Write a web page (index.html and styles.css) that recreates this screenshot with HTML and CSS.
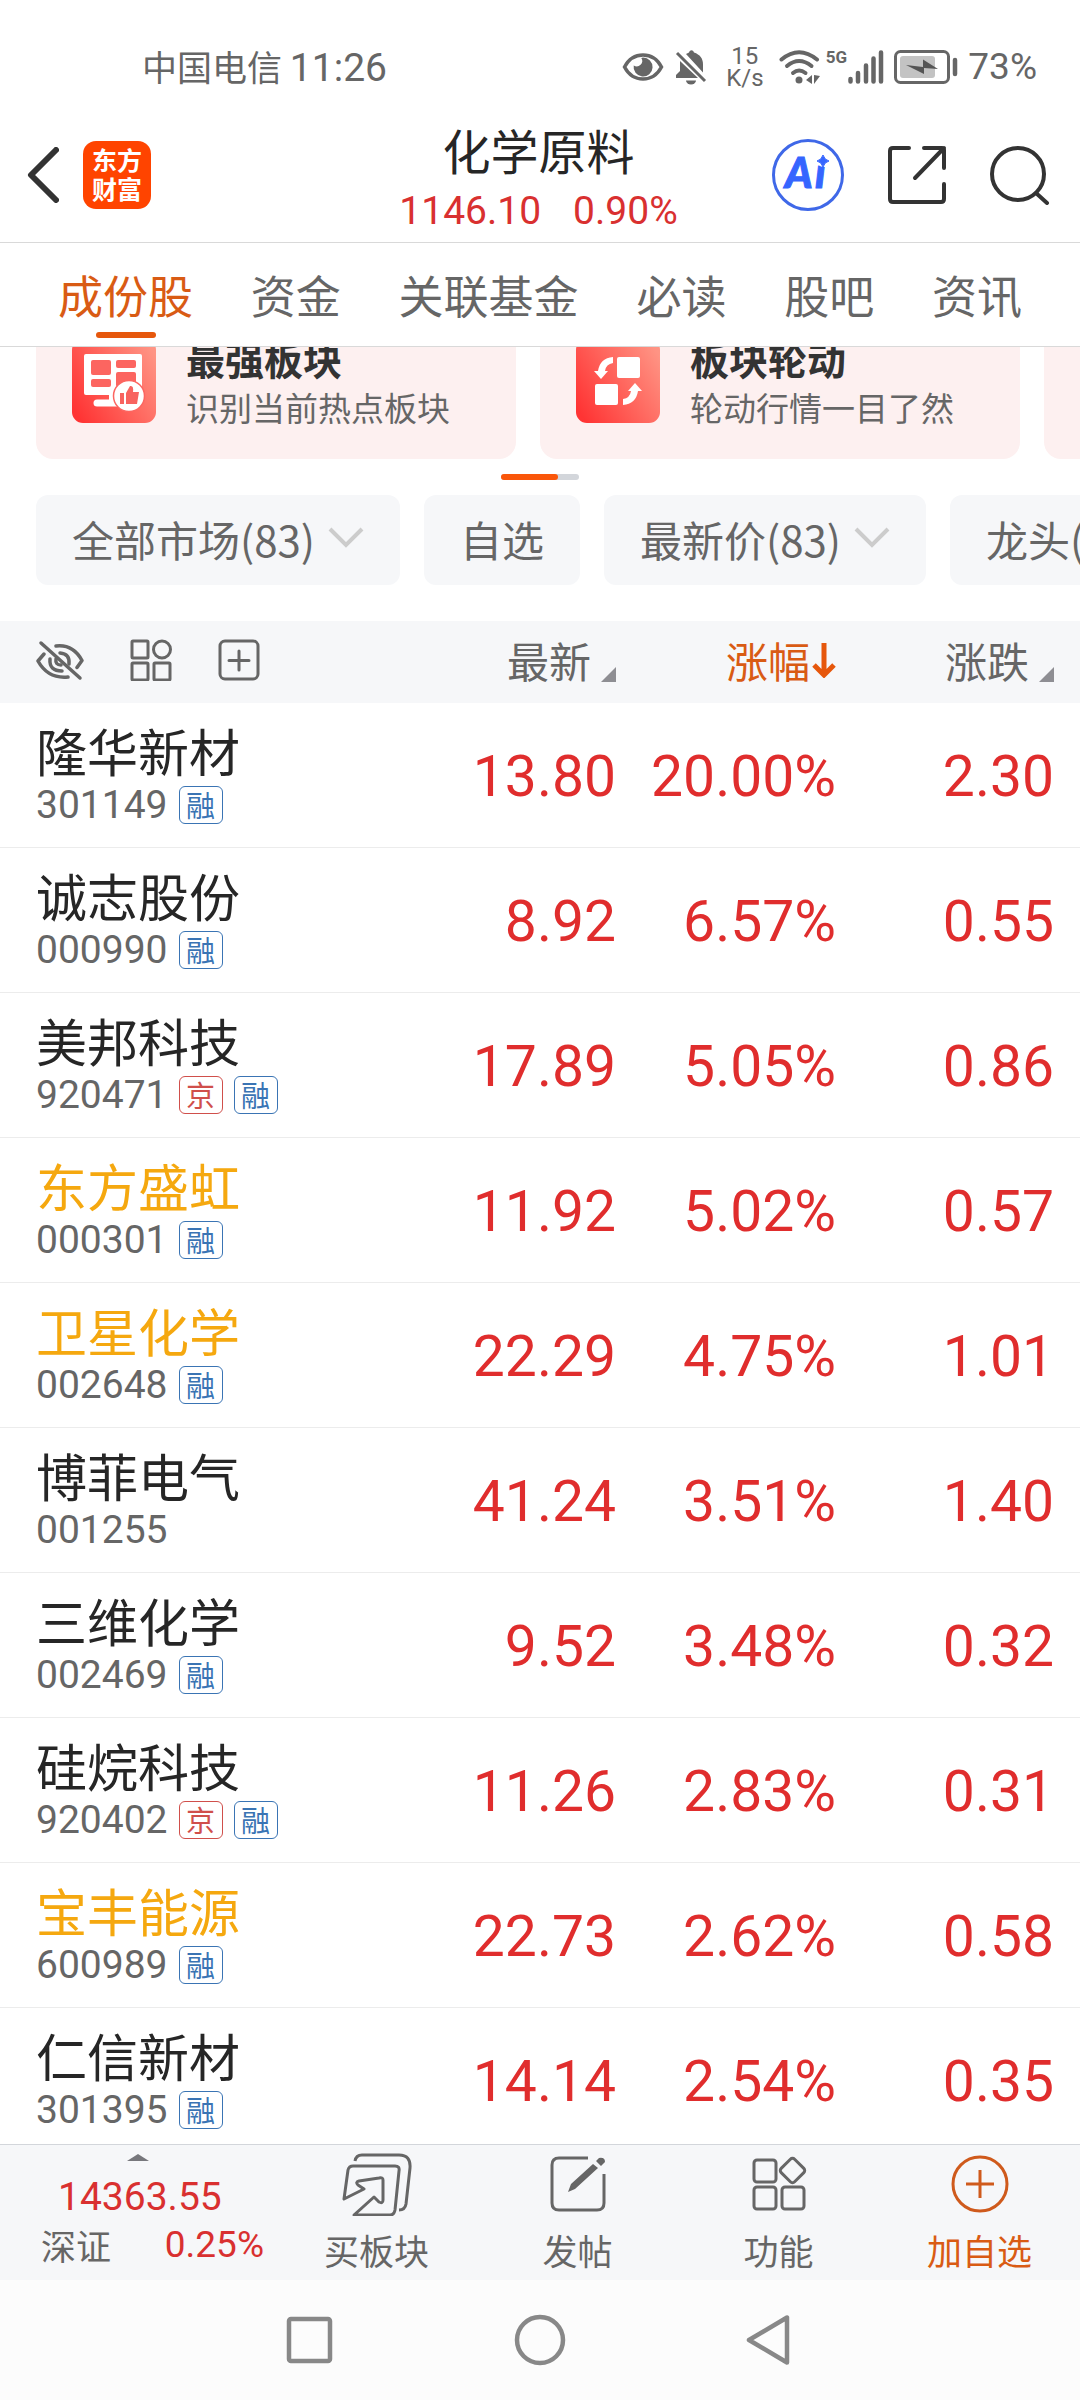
FILE: index.html
```
<!DOCTYPE html>
<html lang="zh-CN">
<head>
    <meta charset="UTF-8">
    <meta name="viewport" content="width=device-width, initial-scale=1.0">
    <title>化学原料</title>
    <link rel="stylesheet" href="styles.css">
</head>
<body>
    <div class="status">
        <div class="status-left">中国电信 <span class="clock">11:26</span></div>
        <div class="status-right">
            <svg width="42" height="30" viewBox="0 0 42 30">
                <path d="M2.500 15C11-1 31-1 39.500 15C31 31 11 31 2.500 15Z" fill="none" stroke="#666" stroke-width="3.500"/>
                <path d="M21 5.500a9.500 9.500 0 1 1-9.300 8a5.500 5.500 0 0 0 7.600-7.600z" fill="#666"/>
            </svg>
            <svg class="bell" width="32" height="36" viewBox="0 0 32 36">
                <path d="M11 5l3-1.500c1-3 4-3 5 0c6 2 9 6 9 12v8z" fill="#666"/>
                <path d="M5 12L23 29H1v-3l4-4z" fill="#666"/>
                <path d="M11 31.500h10a5 4 0 0 1-10 0z" fill="#666"/>
                <path d="M2 4l28 28" stroke="#666" stroke-width="3"/>
            </svg>
            <div class="speed"><span>15</span><span>K/s</span></div>
            <svg class="wifi" width="42" height="34" viewBox="0 0 42 34">
                <g fill="none" stroke="#666" stroke-width="4" stroke-linecap="round">
                    <path d="M2.500 9.500Q20-5 38 9.500"/>
                    <path d="M8 16Q20 6 32.500 16"/>
                    <path d="M14 23Q20 18 26.500 23"/>
                </g>
                <circle cx="20" cy="30" r="3.500" fill="#666"/>
                <path d="M27 30l6-5v9zM35 25v9l6-8z" fill="#666"/>
            </svg>
            <span class="net">5G</span>
            <svg width="36" height="34" viewBox="0 0 36 34">
                <path d="M2.500 29v2.500M10 23v8.500M18 15.500v16M25.500 8.500v23M33 2.500v29" stroke="#666" stroke-width="4.500" stroke-linecap="round"/>
            </svg>
            <svg class="battery" width="64" height="34" viewBox="0 0 64 34">
                <rect x="1.500" y="1.500" width="53" height="31" rx="5" fill="none" stroke="#666" stroke-width="3"/>
                <rect x="6" y="6" width="35" height="22" rx="3" fill="#c3c3c3"/>
                <path d="M12 15l17 2V9.500L44 19l-14-1v6z" fill="#555"/>
                <path d="M61 10v14" stroke="#666" stroke-width="4.500" stroke-linecap="round"/>
            </svg>
            <span class="percent">73%</span>
        </div>
    </div>

    <header class="header">
        <div class="header-left">
            <button type="button" aria-label="返回">
                <svg width="32" height="56" viewBox="0 0 32 56"><path d="M29 3L4 28l25 25" fill="none" stroke="#333" stroke-width="6" stroke-linecap="round" stroke-linejoin="round"/></svg>
            </button>
            <a class="logo" href="#">东方<br>财富</a>
        </div>
        <div class="heading">
            <h1>化学原料</h1>
            <p><span>1146.10</span><span>0.90%</span></p>
        </div>
        <div class="header-right">
            <button type="button" aria-label="Ai">
                <svg width="72" height="72" viewBox="0 0 72 72">
                    <circle cx="36" cy="36" r="34.500" fill="#fff" stroke="#3f68e8" stroke-width="3"/>
                    <text class="ai" x="13" y="49">A<tspan x="43">i</tspan></text>
                    <circle cx="52" cy="20" r="8" fill="#fff"/>
                    <path d="M51 16q1.500 5 6 6q-4.500 1-6 6q-1.500-5-6-6q4.500-1 6-6z" fill="#3565ff" stroke="#3565ff"/>
                </svg>
            </button>
            <button type="button" aria-label="分享">
                <svg width="60" height="60" viewBox="0 0 60 60">
                    <path d="M22 3H6Q3 3 3 6v48q0 3 3 3h48q3 0 3-3V39M37 3h18q2 0 2 2v18M57 3L28 33" fill="none" stroke="#333" stroke-width="4" stroke-linecap="round"/>
                </svg>
            </button>
            <button type="button" aria-label="搜索">
                <svg width="60" height="60" viewBox="0 0 60 60">
                    <circle cx="28" cy="29" r="26" fill="none" stroke="#333" stroke-width="4"/>
                    <path d="M46 48l11 10" stroke="#333" stroke-width="4" stroke-linecap="round"/>
                </svg>
            </button>
        </div>
    </header>

    <nav class="tabs">
        <a class="active" href="#">成份股</a>
        <a href="#">资金</a>
        <a href="#">关联基金</a>
        <a href="#">必读</a>
        <a href="#">股吧</a>
        <a href="#">资讯</a>
    </nav>

    <main>
        <div class="cards">
            <a class="card" href="#">
                <svg width="84" height="84" viewBox="0 0 84 84">
                    <defs>
                        <linearGradient id="red" x1="0" y1="0.8" x2="1" y2="0.2">
                            <stop offset="0" stop-color="#ff3434"/>
                            <stop offset="1" stop-color="#ff9484"/>
                        </linearGradient>
                    </defs>
                    <rect width="84" height="84" rx="11" fill="url(#red)"/>
                    <path d="M14 15h54q2 0 2 2v39H14q-2 0-2-2V17q0-2 2-2z" fill="#fff"/>
                    <path d="M25 64h28" stroke="#fff" stroke-width="7" stroke-linecap="round"/>
                    <path d="M37 55h9v7h-9z" fill="#fff"/>
                    <g fill="#fc6560">
                        <rect x="19" y="21" width="20" height="15" rx="2"/>
                        <rect x="44" y="21" width="20" height="8" rx="2"/>
                        <rect x="44" y="33" width="20" height="15" rx="2"/>
                        <rect x="19" y="40" width="20" height="8" rx="2"/>
                    </g>
                    <circle cx="57" cy="57" r="15.500" fill="#fff" stroke="#fc6560" stroke-width="1.500"/>
                    <path d="M48 54h4v11h-4zM54 54l4-7q4-1 3 6h6l-2 12H54z" fill="#f8635f"/>
                </svg>
                <div class="card-text">
                    <strong>最强板块</strong>
                    <span>识别当前热点板块</span>
                </div>
            </a>
            <a class="card" href="#">
                <svg width="84" height="84" viewBox="0 0 84 84">
                    <rect width="84" height="84" rx="11" fill="url(#red)"/>
                    <rect x="41" y="18" width="23" height="21" rx="2" fill="#fff"/>
                    <rect x="19" y="45" width="23" height="21" rx="2" fill="#fff"/>
                    <path d="M37 18v6q-7 1-8 8h3l-7 8-7-8h4q2-13 15-14zM47 66v-6q7-1 8-8h-3l7-8 7 8h-4q-2 13-15 14z" fill="#fff"/>
                </svg>
                <div class="card-text">
                    <strong>板块轮动</strong>
                    <span>轮动行情一目了然</span>
                </div>
            </a>
            <a class="card" href="#" aria-label="更多"></a>
        </div>
        <div class="indicator"><span></span></div>

        <div class="filters">
            <label class="filter">
                <select aria-label="市场"><option>全部市场(83)</option></select>
                <svg width="36" height="22" viewBox="0 0 36 22"><path d="M2 2l16 16L34 2" fill="none" stroke="#ccc" stroke-width="4"/></svg>
            </label>
            <button class="filter" type="button">自选</button>
            <label class="filter">
                <select aria-label="价格"><option>最新价(83)</option></select>
                <svg width="36" height="22" viewBox="0 0 36 22"><path d="M2 2l16 16L34 2" fill="none" stroke="#ccc" stroke-width="4"/></svg>
            </label>
            <button class="filter" type="button">龙头(10)</button>
        </div>

        <table class="stocks">
            <thead>
                <tr>
                    <th>
                        <div class="tools">
                            <button type="button" aria-label="隐藏">
                                <svg width="48" height="42" viewBox="0 0 48 42" fill="none" stroke="#666" stroke-width="3.500" stroke-linecap="round" stroke-linejoin="round">
                                    <path d="M5 4l39 35"/>
                                    <path d="M20 7q17-2 26 14.500l-5 7M8 15l-6 7q10 18 30 16"/>
                                    <path d="M24 14q10 1 9 11M14 20q-1 12 12 12M20 20q-1 6 5 6"/>
                                </svg>
                            </button>
                            <button type="button" aria-label="布局">
                                <svg width="42" height="42" viewBox="0 0 42 42" fill="none" stroke="#666" stroke-width="3">
                                    <rect x="2" y="2" width="16" height="17" rx="1"/>
                                    <circle cx="32" cy="10.500" r="8.500"/>
                                    <rect x="2" y="24" width="16" height="17" rx="1"/>
                                    <rect x="24" y="24" width="16" height="17" rx="1"/>
                                </svg>
                            </button>
                            <button type="button" aria-label="添加">
                                <svg width="42" height="42" viewBox="0 0 42 42" fill="none" stroke="#666" stroke-width="3">
                                    <rect x="2" y="2" width="38" height="38" rx="5"/>
                                    <path d="M21 12v19M11 21.500h20" stroke-linecap="round"/>
                                </svg>
                            </button>
                        </div>
                    </th>
                    <th><button class="sort" type="button">最新</button></th>
                    <th>
                        <button class="sort-active" type="button">涨幅<svg width="24" height="36" viewBox="0 0 24 36"><path d="M12 1v32M2 23l10 10 10-10" fill="none" stroke="#e6570c" stroke-width="5"/></svg></button>
                    </th>
                    <th><button class="sort" type="button">涨跌</button></th>
                </tr>
            </thead>
            <tbody>
                <tr>
                    <td><div class="name">隆华新材</div><div class="code">301149<i>融</i></div></td>
                    <td>13.80</td><td>20.00%</td><td>2.30</td>
                </tr>
                <tr>
                    <td><div class="name">诚志股份</div><div class="code">000990<i>融</i></div></td>
                    <td>8.92</td><td>6.57%</td><td>0.55</td>
                </tr>
                <tr>
                    <td><div class="name">美邦科技</div><div class="code">920471<i class="bj">京</i><i>融</i></div></td>
                    <td>17.89</td><td>5.05%</td><td>0.86</td>
                </tr>
                <tr>
                    <td><div class="name own">东方盛虹</div><div class="code">000301<i>融</i></div></td>
                    <td>11.92</td><td>5.02%</td><td>0.57</td>
                </tr>
                <tr>
                    <td><div class="name own">卫星化学</div><div class="code">002648<i>融</i></div></td>
                    <td>22.29</td><td>4.75%</td><td>1.01</td>
                </tr>
                <tr>
                    <td><div class="name">博菲电气</div><div class="code">001255</div></td>
                    <td>41.24</td><td>3.51%</td><td>1.40</td>
                </tr>
                <tr>
                    <td><div class="name">三维化学</div><div class="code">002469<i>融</i></div></td>
                    <td>9.52</td><td>3.48%</td><td>0.32</td>
                </tr>
                <tr>
                    <td><div class="name">硅烷科技</div><div class="code">920402<i class="bj">京</i><i>融</i></div></td>
                    <td>11.26</td><td>2.83%</td><td>0.31</td>
                </tr>
                <tr>
                    <td><div class="name own">宝丰能源</div><div class="code">600989<i>融</i></div></td>
                    <td>22.73</td><td>2.62%</td><td>0.58</td>
                </tr>
                <tr>
                    <td><div class="name">仁信新材</div><div class="code">301395<i>融</i></div></td>
                    <td>14.14</td><td>2.54%</td><td>0.35</td>
                </tr>
            </tbody>
        </table>
    </main>

    <footer class="toolbar">
        <a class="index" href="#">
            <svg width="22" height="7" viewBox="0 0 22 7"><path d="M0 7L11 0l11 7z" fill="#77777c"/></svg>
            <div class="index-value">14363.55</div>
            <div class="index-row"><span>深证</span><span class="index-change">0.25%</span></div>
        </a>
        <button class="action" type="button">
            <svg width="70" height="64" viewBox="0 0 70 64" fill="none" stroke="#666" stroke-width="3" stroke-linejoin="round">
                <path d="M13 9q1-6 7-6h37q12 0 11 13l-4 36q-1 6-7 6"/>
                <path d="M2 47l4-29q1-4 5-4h42q5 0 4 5l-4 39q-1 5-5 5H12L32 45l5 5q4 2 4-2V28q0-3-4-2l-20 3q-4 1-1 4l6 4z"/>
            </svg>
            买板块
        </button>
        <button class="action" type="button">
            <svg width="64" height="64" viewBox="0 0 64 64">
                <path d="M42 6H13Q6 6 6 13v38q0 7 7 7h38q7 0 7-7V22" fill="none" stroke="#666" stroke-width="3"/>
                <path d="M22 40l3-8 22-20 5 4-23 21zM50 9l3-3q6-1 6 4l-4 4z" fill="#666"/>
            </svg>
            发帖
        </button>
        <button class="action" type="button">
            <svg width="64" height="64" viewBox="0 0 64 64" fill="none" stroke="#666" stroke-width="3">
                <rect x="7" y="8" width="22" height="22" rx="3"/>
                <rect x="7" y="35" width="22" height="22" rx="3"/>
                <rect x="35" y="35" width="22" height="22" rx="3"/>
                <rect x="36" y="9" width="19" height="19" rx="3" transform="rotate(45 45.500 18.500)"/>
            </svg>
            功能
        </button>
        <button class="action add" type="button">
            <svg width="64" height="64" viewBox="0 0 64 64" fill="none" stroke="#cf5a1c" stroke-width="3">
                <circle cx="32" cy="32" r="27"/>
                <path d="M32 18v28M18 32h28"/>
            </svg>
            加自选
        </button>
    </footer>

    <div class="system-nav">
        <button type="button" aria-label="最近"><svg width="52" height="52" viewBox="0 0 52 52"><rect x="5" y="5" width="41" height="42" rx="2" fill="none" stroke="#888" stroke-width="4.500"/></svg></button>
        <button type="button" aria-label="主页"><svg width="52" height="52" viewBox="0 0 52 52"><circle cx="26" cy="26" r="23" fill="none" stroke="#888" stroke-width="4.500"/></svg></button>
        <button type="button" aria-label="后退"><svg width="52" height="52" viewBox="0 0 52 52"><path d="M43 3.500v45L5 26z" fill="none" stroke="#888" stroke-width="4.500" stroke-linejoin="round"/></svg></button>
    </div>
</body>
</html>
```
FILE: styles.css
```
* {
    box-sizing: border-box;
}
body {
    margin: 0;
    height: 100vh;
    display: flex;
    flex-direction: column;
    overflow: hidden;
    background: #fff;
    color: #666;
    font-family: "Noto Sans CJK SC", sans-serif;
}
button, select {
    margin: 0;
    padding: 0;
    border: 0;
    background: none;
    color: inherit;
    font: inherit;
}
a {
    color: inherit;
    text-decoration: none;
}
svg {
    display: block;
    flex: none;
}

/* status bar */
.status {
    flex: none;
    display: flex;
    justify-content: space-between;
    align-items: center;
    height: 108px;
    padding: 25px 43px 0 142px;
}
.status-left {
    font-size: 35px;
    line-height: 48px;
}
.clock {
    font-family: Roboto, sans-serif;
    font-size: 39px;
}
.status-right {
    display: flex;
    align-items: center;
    font-family: Roboto, sans-serif;
}
.bell {
    margin-left: 11px;
}
.speed {
    display: flex;
    flex-direction: column;
    width: 37px;
    margin: 0 16px 0 19px;
    text-align: center;
    font-size: 24px;
    line-height: 22px;
}
.net {
    width: 24px;
    margin-left: 3px;
    padding-bottom: 20px;
    text-align: center;
    font-size: 17px;
    line-height: 18px;
    font-weight: bold;
}
.battery {
    margin: 0 10px;
}
.percent {
    font-size: 37px;
}

/* title bar */
.header {
    flex: none;
    display: grid;
    grid-template-columns: 1fr auto 1fr;
    align-items: center;
    height: 135px;
    padding: 0 30px 0 27px;
    border-bottom: 1px solid #d9d9d9;
}
.header-left, .header-right {
    display: flex;
    align-items: center;
}
.header-left {
    gap: 24px;
}
.header-right {
    justify-content: flex-end;
    gap: 43px;
}
.logo {
    width: 68px;
    height: 68px;
    padding-top: 4px;
    border-radius: 13px;
    background: #ff4400;
    color: #fff;
    text-align: center;
    font-size: 25px;
    line-height: 29px;
    font-weight: bold;
}
.heading {
    padding-top: 10px;
    text-align: center;
}
.heading h1 {
    margin: 0;
    color: #262626;
    font-size: 48px;
    line-height: 58px;
    font-weight: normal;
}
.heading p {
    display: flex;
    justify-content: center;
    gap: 32px;
    margin: 4px 0 0;
    color: #d93030;
    font-family: Roboto, sans-serif;
    font-size: 39px;
    line-height: 58px;
}
.ai {
    fill: #3565ff;
    stroke: #3565ff;
    font-family: Lato, sans-serif;
    font-size: 42px;
    font-style: italic;
    font-weight: 900;
}

/* tabs */
.tabs {
    flex: none;
    display: flex;
    justify-content: space-between;
    height: 104px;
    padding: 0 58px;
    border-bottom: 1px solid #d9d9d9;
    font-size: 45px;
    line-height: 103px;
}
.tabs .active {
    position: relative;
    color: #d95b14;
}
.tabs .active::after {
    content: "";
    position: absolute;
    left: 50%;
    bottom: 8px;
    width: 60px;
    height: 6px;
    margin-left: -30px;
    border-radius: 3px;
    background: #e6570c;
}

main {
    flex: 1;
    min-height: 0;
    overflow: hidden;
}

/* cards, scrolled partly under the tabs */
.cards {
    display: flex;
    gap: 24px;
    margin-top: -44px;
    padding-left: 36px;
}
.card {
    flex: none;
    display: flex;
    align-items: center;
    gap: 30px;
    width: 480px;
    height: 156px;
    padding: 0 36px;
    border-radius: 17px;
    background: #fdf0f0;
}
.card-text {
    display: flex;
    flex-direction: column;
    gap: 2px;
    padding-top: 3px;
    font-size: 33px;
    line-height: 47px;
}
.card-text strong {
    color: #333;
    font-size: 39px;
}
.indicator {
    width: 78px;
    height: 6px;
    margin: 15px auto;
    border-radius: 3px;
    background: #d3d6db;
}
.indicator span {
    display: block;
    width: 57px;
    height: 6px;
    border-radius: 3px;
    background: #fa560a;
}

/* filters */
.filters {
    display: flex;
    gap: 24px;
    margin-bottom: 36px;
    padding-left: 36px;
    font-size: 42px;
}
.filter {
    flex: none;
    display: flex;
    align-items: center;
    gap: 12px;
    height: 90px;
    padding: 0 36px 4px;
    border-radius: 12px;
    background: #f6f7f9;
}
.filter select {
    height: 86px;
    appearance: none;
}

/* stock table */
.stocks {
    width: 100%;
    table-layout: fixed;
    border-spacing: 0;
}
th {
    height: 82px;
    padding: 0 0 4px;
    background: #f6f7f9;
    font-size: 42px;
    line-height: 60px;
    font-weight: normal;
}
th:nth-child(2) {
    width: 180px;
}
th:nth-child(3) {
    width: 220px;
}
th:nth-child(4) {
    width: 244px;
}
th:first-child, td:first-child {
    padding-left: 36px;
    text-align: left;
}
th:last-child, td:last-child {
    padding-right: 26px;
}
.tools {
    display: flex;
    gap: 46px;
}
.sort, .sort-active {
    display: flex;
    align-items: center;
    margin-left: auto;
}
.sort::after {
    content: "";
    align-self: flex-end;
    margin: 0 0 8px 10px;
    border-left: 15px solid transparent;
    border-bottom: 15px solid #8e8e93;
}
.sort-active {
    gap: 2px;
    color: #d95b14;
}
td {
    height: 145px;
    padding: 3px 0 0;
    border-bottom: 1px solid #ececec;
    color: #e02d2d;
    text-align: right;
    font-family: Roboto, sans-serif;
    font-size: 57px;
    line-height: 72px;
}
.name {
    color: #262626;
    font-family: "Noto Sans CJK SC", sans-serif;
    font-size: 51px;
    line-height: 56px;
}
.own {
    color: #f5a80f;
}
.code {
    display: flex;
    align-items: center;
    gap: 11px;
    color: #666;
    font-size: 39px;
    line-height: 54px;
}
.code i {
    width: 44px;
    height: 38px;
    border: 1px solid #3a74b4;
    border-radius: 6px;
    color: #3a74b4;
    text-align: center;
    font-family: "Noto Sans CJK SC", sans-serif;
    font-size: 29px;
    line-height: 34px;
    font-style: normal;
}
.code .bj {
    border-color: #d04f4b;
    color: #d04f4b;
}

/* bottom toolbar */
.toolbar {
    flex: none;
    display: flex;
    height: 136px;
    border-top: 1px solid #d3d6db;
    background: #f6f7f9;
    font-size: 35px;
}
.index {
    width: 276px;
    padding: 9px 12px 0 41px;
    line-height: 48px;
}
.index svg {
    margin: 0 auto 12px 86px;
}
.index-value, .index-change {
    color: #d93030;
    font-family: Roboto, sans-serif;
}
.index-value {
    padding-left: 17px;
    font-size: 39px;
}
.index-row {
    display: flex;
    justify-content: space-between;
}
.index-change {
    font-size: 37px;
}
.action {
    flex: 1;
    display: flex;
    flex-direction: column;
    align-items: center;
    gap: 9px;
    padding-top: 7px;
    line-height: 50px;
}
.add {
    color: #d95b14;
}

/* system navigation */
.system-nav {
    flex: none;
    display: flex;
    justify-content: space-around;
    align-items: center;
    height: 120px;
    padding: 0 18%;
    background: #fcfcfc;
}
```
